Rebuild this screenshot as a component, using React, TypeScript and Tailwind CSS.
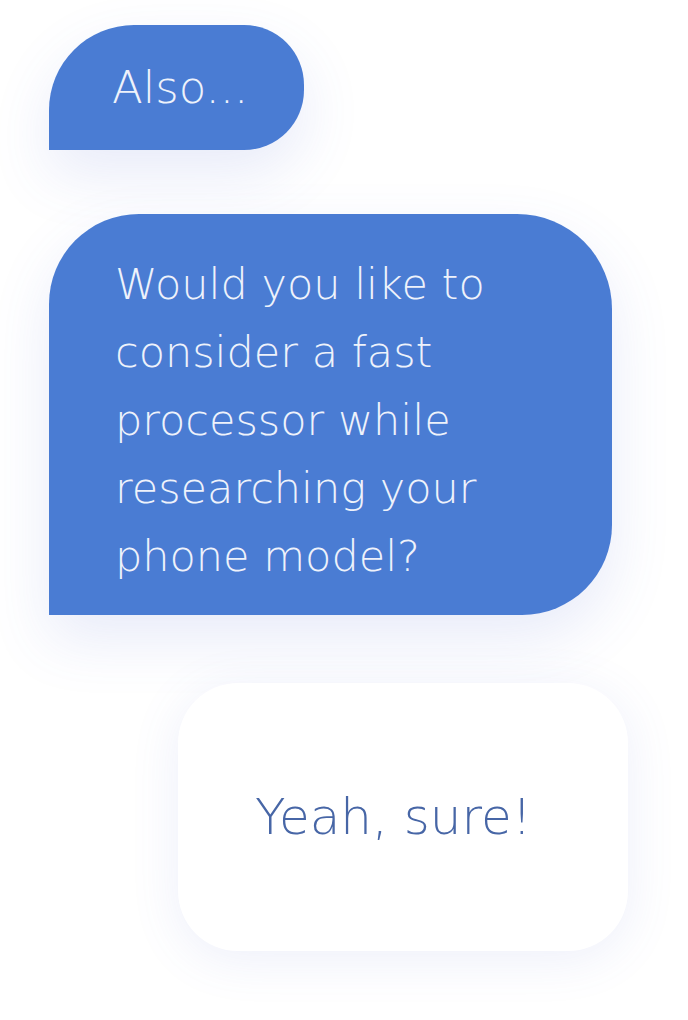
export default function App() {
  return (
    <div
      className="min-h-[1020px] w-[688px] bg-white overflow-hidden"
      style={{ fontFamily: '"DejaVu Sans", "Noto Sans", sans-serif' }}
    >
      <div className="flex flex-col items-start pl-[49px] pt-[25px]">
        {/* short bot bubble */}
        <div className="flex h-[125px] w-[255px] items-center rounded-tl-[85px] rounded-tr-[60px] rounded-br-[60px] bg-[#4a7cd3] pl-[63px] shadow-[0_24px_60px_rgba(80,100,210,0.13)]">
          <span className="text-[45px] font-extralight leading-none text-[#eef2fb]">Also...</span>
        </div>

        {/* long bot bubble */}
        <div className="mt-[64px] w-[563px] rounded-tl-[90px] rounded-tr-[95px] rounded-br-[90px] bg-[#4a7cd3] pt-[36px] pb-[25px] pl-[66px] shadow-[0_24px_60px_rgba(80,100,210,0.13)]">
          <p className="w-[420px] text-[43px] font-extralight leading-[68px] text-[#eef2fb]">
            Would you like to consider a fast processor while researching your phone model?
          </p>
        </div>

        {/* user reply */}
        <div className="ml-[129px] mt-[68px] flex h-[268px] w-[450px] items-center rounded-[60px] bg-white pl-[77px] shadow-[0_8px_50px_rgba(90,110,210,0.11)]">
          <span className="text-[50px] font-extralight leading-none text-[#4766a6]">Yeah, sure!</span>
        </div>
      </div>
    </div>
  );
}
